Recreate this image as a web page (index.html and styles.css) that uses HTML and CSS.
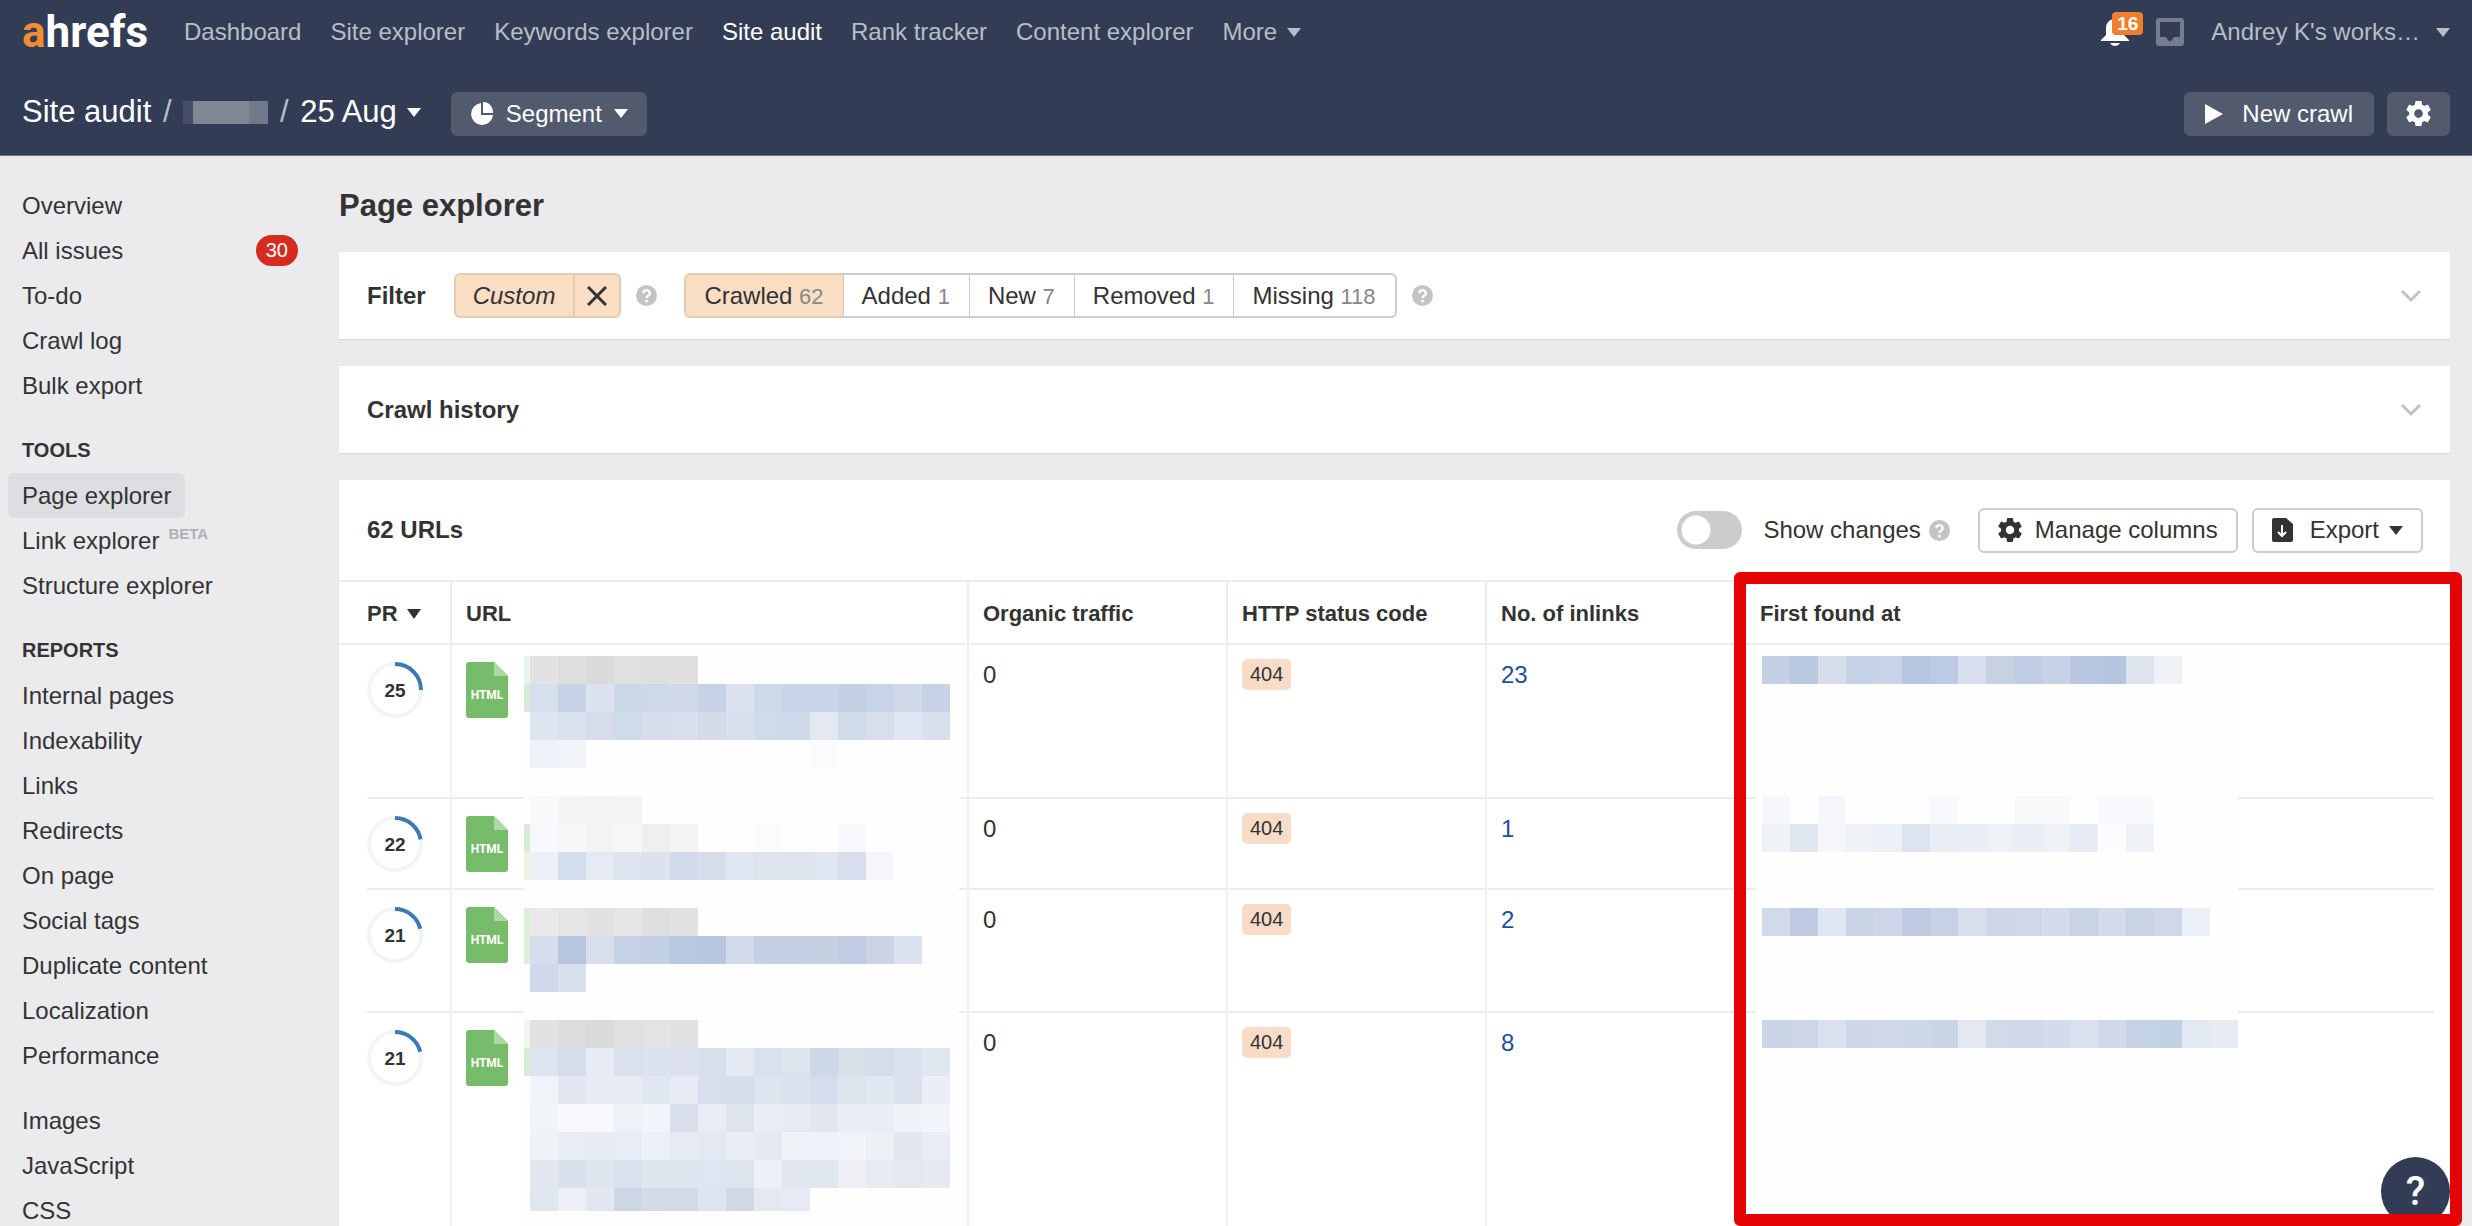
FILE: index.html
```
<!DOCTYPE html>
<html lang="en">
<head>
  <meta charset="utf-8">
  <title>Page explorer - Site audit</title>
  <link rel="stylesheet" href="styles.css">
</head>
<body>
  <svg class="sprite" aria-hidden="true">
    <symbol id="gear" viewBox="2 2 20 20">
      <path fill="currentColor" d="M19.43 12.98c.04-.32.07-.64.07-.98s-.03-.66-.07-.98l2.11-1.65c.19-.15.24-.42.12-.64l-2-3.46c-.12-.22-.39-.3-.61-.22l-2.49 1c-.52-.4-1.08-.73-1.69-.98l-.38-2.65C14.46 2.18 14.25 2 14 2h-4c-.25 0-.46.18-.49.42l-.38 2.65c-.61.25-1.17.59-1.69.98l-2.49-1c-.23-.09-.49 0-.61.22l-2 3.46c-.13.22-.07.49.12.64l2.11 1.65c-.04.32-.07.65-.07.98s.03.66.07.98l-2.11 1.65c-.19.15-.24.42-.12.64l2 3.46c.12.22.39.3.61.22l2.49-1c.52.4 1.08.73 1.69.98l.38 2.65c.03.24.24.42.49.42h4c.25 0 .46-.18.49-.42l.38-2.65c.61-.25 1.17-.59 1.69-.98l2.49 1c.23.09.49 0 .61-.22l2-3.46c.12-.22.07-.49-.12-.64l-2.11-1.65zM12 15.5c-1.93 0-3.5-1.57-3.5-3.5s1.57-3.5 3.5-3.5 3.500 1.57 3.500 3.500-1.570 3.500-3.500 3.500z"/>
    </symbol>
    <symbol id="help" viewBox="0 0 21 21">
      <circle cx="10.500" cy="10.500" r="10.500" fill="#c4c4c4"/>
      <path d="M7.300 8.200a3.200 3 0 1 1 4.900 2.500c-1.200.8-1.700 1.100-1.700 2.300" fill="none" stroke="#fff" stroke-width="2.300"/>
      <circle cx="10.500" cy="16" r="1.500" fill="#fff"/>
    </symbol>
    <symbol id="chevron" viewBox="0 0 22 14">
      <path d="M2 2l9 9 9-9" fill="none" stroke="#c4c4c4" stroke-width="3"/>
    </symbol>
    <symbol id="file" viewBox="0 0 42 56">
      <path d="M3 0h25l14 14v39a3 3 0 0 1-3 3H3a3 3 0 0 1-3-3V3a3 3 0 0 1 3-3z" fill="#77bc6b"/>
      <path d="M28 0l14 14H28z" fill="#add8a6"/>
    </symbol>
  </svg>

  <div class="page">
    <header class="header">
      <nav class="nav">
        <a class="logo" href="#"><span class="logo-a">a</span><span>hrefs</span></a>
        <a href="#">Dashboard</a>
        <a href="#">Site explorer</a>
        <a href="#">Keywords explorer</a>
        <a href="#" class="active">Site audit</a>
        <a href="#">Rank tracker</a>
        <a href="#">Content explorer</a>
        <button class="link-button">More <span class="caret"></span></button>
        <div class="nav-right">
          <button class="icon-button bell" aria-label="Notifications">
            <svg width="28" height="28" viewBox="0 0 28 28"><path d="M14 1c-5.500 0-9 4-9 9v7L0 22v1h28v-1l-5-5v-7c0-5-3.500-9-9-9zM9 25c1 2 3 3 5 3s4-1 5-3z" fill="#fff"/></svg>
            <span class="bell-count">16</span>
          </button>
          <button class="icon-button" aria-label="Inbox">
            <svg width="28" height="28" viewBox="0 0 28 28"><path fill="#747c8e" fill-rule="evenodd" d="M3 0h22a3 3 0 0 1 3 3v22a3 3 0 0 1-3 3H3a3 3 0 0 1-3-3V3a3 3 0 0 1 3-3zM4 4v15h6c1 0 1 4 4 4s3-4 4-4h6V4z"/></svg>
          </button>
          <button class="link-button workspace">Andrey K's works… <span class="caret"></span></button>
        </div>
      </nav>
      <div class="subnav">
        <a href="#" class="crumb">Site audit</a>
        <span class="slash">/</span>
        <span class="project"></span>
        <span class="slash">/</span>
        <button class="link-button crumb">25 Aug <span class="caret"></span></button>
        <button class="dark-button segment">
          <svg width="24" height="24" viewBox="0 0 24 24"><path d="M11 1a11 11 0 1 0 12 12H11z" fill="#fff"/><path d="M13 0a10 10 0 0 1 10 11H13z" fill="#fff"/></svg>
          Segment <span class="caret"></span>
        </button>
        <button class="dark-button crawl">
          <svg width="18" height="20" viewBox="0 0 18 20"><path d="M0 0l18 10L0 20z" fill="#fff"/></svg>
          New crawl
        </button>
        <button class="dark-button" aria-label="Settings"><svg width="25" height="25"><use href="#gear"/></svg></button>
      </div>
    </header>

    <div class="body">
      <aside class="sidebar">
        <ul>
          <li><a href="#">Overview</a></li>
          <li><a href="#">All issues</a><span class="count">30</span></li>
          <li><a href="#">To-do</a></li>
          <li><a href="#">Crawl log</a></li>
          <li><a href="#">Bulk export</a></li>
        </ul>
        <h2>TOOLS</h2>
        <ul>
          <li><a href="#" class="current">Page explorer</a></li>
          <li><a href="#">Link explorer</a><span class="beta">BETA</span></li>
          <li><a href="#">Structure explorer</a></li>
        </ul>
        <h2>REPORTS</h2>
        <ul>
          <li><a href="#">Internal pages</a></li>
          <li><a href="#">Indexability</a></li>
          <li><a href="#">Links</a></li>
          <li><a href="#">Redirects</a></li>
          <li><a href="#">On page</a></li>
          <li><a href="#">Social tags</a></li>
          <li><a href="#">Duplicate content</a></li>
          <li><a href="#">Localization</a></li>
          <li><a href="#">Performance</a></li>
        </ul>
        <ul class="spaced">
          <li><a href="#">Images</a></li>
          <li><a href="#">JavaScript</a></li>
          <li><a href="#">CSS</a></li>
        </ul>
      </aside>

      <main class="main">
        <h1>Page explorer</h1>

        <section class="card bar">
          <h3>Filter</h3>
          <div class="custom">
            <button class="custom-name">Custom</button>
            <button class="custom-clear" aria-label="Clear filter">
              <svg width="20" height="20" viewBox="0 0 20 20"><path d="M1 1l18 18M19 1L1 19" stroke="#333" stroke-width="3"/></svg>
            </button>
          </div>
          <svg class="help" width="21" height="21"><use href="#help"/></svg>
          <div class="tabs">
            <button class="selected">Crawled <span>62</span></button>
            <button>Added <span>1</span></button>
            <button>New <span>7</span></button>
            <button>Removed <span>1</span></button>
            <button>Missing <span>118</span></button>
          </div>
          <svg class="help" width="21" height="21"><use href="#help"/></svg>
          <button class="icon-button expand" aria-label="Expand filter"><svg width="22" height="14"><use href="#chevron"/></svg></button>
        </section>

        <section class="card bar">
          <h3>Crawl history</h3>
          <button class="icon-button expand" aria-label="Expand crawl history"><svg width="22" height="14"><use href="#chevron"/></svg></button>
        </section>

        <section class="card results">
          <div class="toolbar">
            <h3>62 URLs</h3>
            <input type="checkbox" class="toggle" id="changes">
            <label for="changes">Show changes</label>
            <svg class="toolbar-help" width="21" height="21"><use href="#help"/></svg>
            <button class="light-button">
              <svg width="24" height="24"><use href="#gear"/></svg>
              Manage columns
            </button>
            <button class="light-button export">
              <svg width="21" height="24" viewBox="0 0 21 24"><path d="M2 0h12l7 6v16a2 2 0 0 1-2 2H2a2 2 0 0 1-2-2V2a2 2 0 0 1 2-2z" fill="#333"/><path d="M10 7v11M6 14l4 4 4-4" fill="none" stroke="#fff" stroke-width="2"/></svg>
              Export <span class="caret"></span>
            </button>
          </div>
          <table>
            <colgroup>
              <col class="col-pr"><col class="col-url"><col class="col-num"><col class="col-num"><col class="col-num"><col>
            </colgroup>
            <thead>
              <tr>
                <th>PR <span class="caret"></span></th>
                <th>URL</th>
                <th>Organic traffic</th>
                <th>HTTP status code</th>
                <th>No. of inlinks</th>
                <th>First found at</th>
              </tr>
            </thead>
            <tbody>
              <tr class="lines-4">
                <td>
                  <div class="rating"><svg width="56" height="56" viewBox="0 0 56 56"><circle class="ring" cx="28" cy="28" r="26"/><circle class="arc" cx="28" cy="28" r="26" pathLength="100" stroke-dasharray="25 75" transform="rotate(-90 28 28)"/></svg><span>25</span></div>
                </td>
                <td>
                  <div class="file"><svg width="42" height="56"><use href="#file"/></svg><span>HTML</span></div>
                  <div class="mask mask-url" id="mask-url"></div>
                </td>
                <td>0</td>
                <td><span class="status">404</span></td>
                <td><a href="#">23</a></td>
                <td><div class="mask mask-found" id="mask-found"></div></td>
              </tr>
              <tr class="lines-2">
                <td>
                  <div class="rating"><svg width="56" height="56" viewBox="0 0 56 56"><circle class="ring" cx="28" cy="28" r="26"/><circle class="arc" cx="28" cy="28" r="26" pathLength="100" stroke-dasharray="22 78" transform="rotate(-90 28 28)"/></svg><span>22</span></div>
                </td>
                <td>
                  <div class="file"><svg width="42" height="56"><use href="#file"/></svg><span>HTML</span></div>
                </td>
                <td>0</td>
                <td><span class="status">404</span></td>
                <td><a href="#">1</a></td>
                <td></td>
              </tr>
              <tr class="lines-3">
                <td>
                  <div class="rating"><svg width="56" height="56" viewBox="0 0 56 56"><circle class="ring" cx="28" cy="28" r="26"/><circle class="arc" cx="28" cy="28" r="26" pathLength="100" stroke-dasharray="21 79" transform="rotate(-90 28 28)"/></svg><span>21</span></div>
                </td>
                <td>
                  <div class="file"><svg width="42" height="56"><use href="#file"/></svg><span>HTML</span></div>
                </td>
                <td>0</td>
                <td><span class="status">404</span></td>
                <td><a href="#">2</a></td>
                <td></td>
              </tr>
              <tr class="lines-6">
                <td>
                  <div class="rating"><svg width="56" height="56" viewBox="0 0 56 56"><circle class="ring" cx="28" cy="28" r="26"/><circle class="arc" cx="28" cy="28" r="26" pathLength="100" stroke-dasharray="21 79" transform="rotate(-90 28 28)"/></svg><span>21</span></div>
                </td>
                <td>
                  <div class="file"><svg width="42" height="56"><use href="#file"/></svg><span>HTML</span></div>
                </td>
                <td>0</td>
                <td><span class="status">404</span></td>
                <td><a href="#">8</a></td>
                <td></td>
              </tr>
            </tbody>
          </table>
          <button class="support" aria-label="Help">?</button>
          <div class="highlight"></div>
        </section>
      </main>
    </div>
  </div>

  <script>
    // one string per mosaic line, first value is the narrow strip on the left, "-" is an empty block
    const urlRows = [
      "eaf5ea e2e2e2 dedede dadada e0e0e0 dedede dfdfdf",
      "d8ebd6 d6e0ec c6d2e6 dce3f0 ccd8e8 cdd8ea cfd9eb c6d1e5 dbe1ef ccd9e8 c7d3e6 c8d4e7 c4d1e5 c7d3e6 cfd9ea c7d2e6",
      "- dde5f0 d9e1ed d6ddea d0dbe9 d6deec dadfed d5dbe9 d6e1ec d0dbe9 ced9ea e3e8f3 d1dcea d7deec dfe6f1 d9e0ed",
      "- eef2f8 f1f5f9 - - - - - - - - fbfcfe",
      "-",
      "- fafafa f5f5f5 f3f3f3 f5f5f5",
      "d8ebd6 f6f8fb f7f7f7 f3f3f3 f6f6f6 efefef f3f3f3 - - fcfcfc - - f8f9fc",
      "eaf5e8 ebeff8 d3deed e5eaf5 dce4f0 dbe3ef d1dbeb d6dcea dfe6f2 dce4ee dce4ee dfe6f2 d7deed f5f6fb",
      "-",
      "dcefd9 e9e9e9 e5e5e5 e2e2e2 e7e7e7 dfdfdf e2e2e2",
      "dcefd9 d5deed b7c5e0 d8deec c5d2e6 c4d1e5 b8c8df b8c7e0 d1dbea c4d1e4 c4d1e5 c5d1e3 c0cbe4 cbd3e7 dbe2ef",
      "- cfd9eb d8dfed",
      "-",
      "eff6ee e2e2e2 dcdcdc dadada e0e0e0 e3e3e3 e1e1e1",
      "d8ebd6 dde4f0 d5ddeb e6ebf5 dae1ed dce2ef dde1ef d6e0eb e4e8f3 dae0ed dce4ed cbd8e7 d8dfe9 d7ddeb dae1ec dfe7f1",
      "- f0f4f9 e3e7f1 e7ebf4 e8ebf4 e0e7f1 e7eaf4 d8deeb d7ddeb dde5ee dbe1ee d6dceb dce4ee e1e8f2 dbe2ee ebeef8",
      "- f1f5f9 f6f8fc f6f8fc eef2f6 f1f4f9 d9e0ec e8ecf5 dde4ee e9edf5 e7ebf4 e4e7f0 ebeef8 eaecf6 eff2f6 f1f5f9",
      "- eff3f8 e9edf5 e7ebf3 e8ecf5 ecf0f8 e6eaf3 e4e8f1 e8ecf5 e5e9f2 eff2f6 eef2f8 f1f5fa edf0f5 e4e7f1 eaedf6",
      "- e3e7f1 d9dfeb dde5ef dae0ec dee5ef dde5ee dfe6f1 dee5ef ecf0f8 e3e7f0 dfe8f1 edeff4 e7ebf4 e3e8f1 e4e9f2",
      "- dfe7ef ecf0f5 e3e7f1 ccd6e5 d5dce8 d5dbe6 dde4ef d1d8e5 e5e9f2 e6eaf4"
    ];
    const foundRows = [
      "- c4d0e3 b9c9df d6ddea c4d1e6 c8d3e7 b6c6de bccbe3 d7deed c6d1e4 c0cbe4 c7d2e6 b8c7df b5c4df dce4ee eef2f7",
      "-", "-", "-", "-",
      "- f5f7fb fcfdff f5f6fb - - fcfdff f8f9fd - - f9fafc f9fafc - f8f9fc f8f9fd",
      "- eff3f8 dee6f0 f5f7fb eef2f7 ecf0f8 dce4f0 e8edf6 eaeef8 eef2f7 eaeef7 eef2f7 e6ebf5 fbfcfe eff3f8",
      "-", "-",
      "- d0daea bfcbe3 e0e7f2 c9d5e6 ccd6e8 bdcae2 c5d1e5 d9e0ed cdd7e8 ced8ea d2dceb c8d4e6 d2dceb c8d4e5 cfd8ea ebeff8",
      "-", "-", "-",
      "- cad6e7 ccd6e7 dae0ed cdd7e8 cfd9e9 ccd8e8 c9d5e6 e3e8f2 d0dae9 cfd9ea d2dceb d9e0ee cfd9e9 c6d2e5 c3d1e6 e3e9f3 e6ebf4"
    ];

    function drawMask(id, rows) {
      const mask = document.getElementById(id);
      rows.forEach(row => {
        const line = document.createElement("div");
        line.className = "mask-line";
        row.split(" ").forEach(color => {
          const block = document.createElement("i");
          if (color !== "-") block.style.background = "#" + color;
          line.appendChild(block);
        });
        mask.appendChild(line);
      });
    }

    drawMask("mask-url", urlRows);
    drawMask("mask-found", foundRows);
  </script>
</body>
</html>
```
FILE: styles.css
```
* {
  box-sizing: border-box;
}

body {
  margin: 0;
  font-family: "Liberation Sans", Arial, sans-serif;
  font-size: 24px;
  color: #333;
  background: #ebebed;
}

button {
  font: inherit;
  color: inherit;
  padding: 0;
  border: none;
  background: none;
  cursor: pointer;
}

a {
  color: inherit;
  text-decoration: none;
}

svg {
  display: block;
  flex: none;
}

h1, h2, h3, ul {
  margin: 0;
  padding: 0;
}

.sprite {
  position: absolute;
  width: 0;
  height: 0;
}

.page {
  display: flex;
  flex-direction: column;
  height: 100vh;
  overflow: hidden;
}

.caret {
  display: inline-block;
  border: 7px solid transparent;
  border-top: 9px solid currentColor;
  border-bottom: 0;
}

/* header */
.header {
  background: #323d55;
  border-bottom: 1px solid #70788a;
  padding: 0 22px;
  color: #fff;
}

.nav {
  display: flex;
  align-items: center;
  gap: 29px;
  height: 64px;
  color: #b9bdc6;
}

.nav .active {
  color: #fff;
}

.nav .logo {
  display: flex;
  width: 133px;
  font: bold 44px/52px Roboto, sans-serif;
  color: #fff;
}

.logo .logo-a {
  color: #f08c33;
}

.link-button {
  display: flex;
  align-items: center;
  gap: 10px;
}

.nav-right {
  display: flex;
  align-items: center;
  gap: 27px;
  margin-left: auto;
}

.workspace {
  gap: 16px;
}

.icon-button {
  display: block;
}

.bell {
  position: relative;
}

.bell-count {
  position: absolute;
  left: 11px;
  top: -6px;
  width: 31px;
  border-radius: 4px;
  background: #ef7f2f;
  color: #fff;
  font-size: 19px;
  font-weight: bold;
  line-height: 23px;
}

.subnav {
  display: flex;
  align-items: center;
  height: 91px;
  padding-top: 5px;
}

.crumb {
  font-size: 31px;
}

.slash {
  width: 32px;
  font-size: 31px;
  text-align: center;
  color: #b9bdc6;
}

.project {
  width: 85px;
  height: 23px;
  background: linear-gradient(90deg, #464f65 10px, #808694 10px, #808694 66px, #727989 66px);
}

.dark-button {
  display: flex;
  align-items: center;
  height: 44px;
  margin-top: 3px;
  padding: 0 19px;
  border-radius: 6px;
  background: #525a6e;
}

.segment {
  gap: 12px;
  margin-left: 30px;
}

.crawl {
  gap: 19px;
  padding: 0 21px;
  margin-left: auto;
  margin-right: 13px;
}

/* layout */
.body {
  flex: 1;
  display: flex;
  min-height: 0;
}

.sidebar {
  flex: none;
  width: 339px;
  padding: 27px 41px 0 8px;
}

.sidebar ul {
  list-style: none;
}

.sidebar li {
  display: flex;
  align-items: center;
  height: 45px;
}

.sidebar li a {
  padding: 0 14px;
  line-height: 45px;
  border-radius: 6px;
}

.sidebar .current {
  background: #dddee2;
}

.sidebar h2 {
  padding: 20px 14px 0;
  font-size: 20px;
  line-height: 45px;
}

.sidebar .spaced {
  margin-top: 20px;
}

.count {
  margin-left: auto;
  padding: 0 10px;
  border-radius: 16px;
  background: #d52b20;
  color: #fff;
  font-size: 20px;
  line-height: 31px;
}

.beta {
  margin: 0 0 15px -5px;
  font-size: 15px;
  font-weight: bold;
  color: #b0b0b2;
}

.main {
  flex: 1;
  display: flex;
  flex-direction: column;
  min-width: 0;
  padding-right: 22px;
}

h1 {
  margin: 30px 0 26px;
  font-size: 31px;
  line-height: 40px;
}

h3 {
  font-size: 24px;
}

.card {
  background: #fff;
  box-shadow: 0 1px 1px #d9d9dc;
}

/* filter bars */
.bar {
  flex: none;
  display: flex;
  align-items: center;
  height: 87px;
  margin-bottom: 27px;
  padding: 0 28px;
}

.custom {
  display: flex;
  height: 45px;
  margin-left: 28px;
  border: 2px solid #e6cbb0;
  border-radius: 6px;
  background: #f9dec4;
}

.custom-name {
  padding: 0 18px 0 17px;
  font-style: italic;
}

.custom-clear {
  padding: 0 12px;
  border-left: 2px solid #e6cbb0;
}

.help {
  margin-left: 15px;
}

.tabs {
  display: flex;
  height: 45px;
  margin-left: 27px;
}

.tabs button {
  margin-left: -1px;
  padding: 0 19px 0 18px;
  border: 2px solid #ccc;
  border-left-width: 1px;
  border-right-width: 1px;
}

.tabs button span {
  font-size: 22px;
  color: #888;
}

.tabs .selected {
  margin-left: 0;
  border-color: #e6cbb0;
  border-left-width: 2px;
  border-radius: 6px 0 0 6px;
  background: #f9dec4;
}

.tabs button:last-child {
  border-right-width: 2px;
  border-radius: 0 6px 6px 0;
}

.expand {
  margin-left: auto;
}

/* results */
.results {
  position: relative;
  flex: 1;
  min-height: 0;
}

.toolbar {
  display: flex;
  align-items: center;
  height: 100px;
  padding: 0 27px 0 28px;
}

.toggle {
  appearance: none;
  width: 65px;
  height: 38px;
  margin: 0 21px 0 auto;
  border-radius: 19px;
  background: radial-gradient(circle at 19px 19px, #fff 14px, #ccc 15px);
}

.toolbar-help {
  margin: 0 28px 0 8px;
}

.light-button {
  display: flex;
  align-items: center;
  gap: 13px;
  height: 45px;
  padding: 0 18px;
  border: 2px solid #ccc;
  border-radius: 6px;
}

.export {
  margin-left: 14px;
}

.export svg {
  margin-right: 4px;
}

.export .caret {
  margin-left: -3px;
}

table {
  width: 100%;
  table-layout: fixed;
  border-collapse: separate;
  border-spacing: 0;
}

.col-pr {
  width: 113px;
}

.col-url {
  width: 517px;
}

.col-num {
  width: 259px;
}

th {
  height: 65px;
  padding: 2px 14px 0;
  border-top: 2px solid #ececee;
  border-bottom: 2px solid #ececee;
  border-right: 2px solid #ececee;
  font-size: 22px;
  text-align: left;
}

th .caret {
  margin: 0 0 2px 3px;
  border-top-width: 10px;
}

td {
  position: relative;
  padding: 14px;
  border-right: 2px solid #f0f0f2;
  background: linear-gradient(#ececee, #ececee) no-repeat 0 100% / 100% 2px;
  line-height: 31px;
  vertical-align: top;
}

th:first-child,
td:first-child {
  padding-left: 28px;
}

th:last-child,
td:last-child {
  border-right: none;
}

td:first-child {
  background-position: 28px 100%;
}

td:last-child {
  background-size: calc(100% - 16px) 2px;
}

.lines-4 td {
  height: 154px;
}

.lines-2 td {
  height: 91px;
}

.lines-3 td {
  height: 123px;
}

.lines-6 td {
  height: 220px;
}

td a {
  color: #1f4e9e;
}

.rating,
.file {
  display: grid;
  width: 56px;
  margin-top: 3px;
  place-items: center;
  font-size: 19px;
  font-weight: bold;
}

.file {
  width: 42px;
  color: #fff;
  font: bold 12px Roboto, sans-serif;
}

.rating svg,
.rating span,
.file svg,
.file span {
  grid-area: 1 / 1;
}

.file span {
  padding-top: 10px;
}

.ring {
  fill: none;
  stroke: #f3f4f6;
  stroke-width: 4px;
}

.arc {
  fill: none;
  stroke: #3a7ab5;
  stroke-width: 4px;
}

.status {
  display: inline-block;
  padding: 0 8px;
  border-radius: 5px;
  background: #f9dcc8;
  font-size: 20px;
  vertical-align: top;
}

/* pixelated blocks over the private urls */
.mask {
  position: absolute;
  z-index: 1;
  top: 8px;
  padding-top: 3px;
  height: 573px;
  background: #fefefe;
}

.mask-url {
  left: 72px;
  width: 435px;
}

.mask-found {
  left: 10px;
  width: 482px;
}

.mask-line {
  display: flex;
  height: 28px;
}

.mask-line i {
  width: 28px;
}

.mask-line i:first-child {
  width: 6px;
}

.mask-url .mask-line:last-child {
  height: 23px;
}

.support {
  position: absolute;
  z-index: 2;
  right: 0;
  bottom: 0;
  width: 69px;
  height: 69px;
  border-radius: 50%;
  background: #323d55;
  color: #fff;
  font: 500 40px/69px Roboto, sans-serif;
}

.highlight {
  position: absolute;
  z-index: 3;
  top: 92px;
  right: -12px;
  bottom: 0;
  left: 1395px;
  border: 12px solid #e60303;
  border-radius: 6px;
}
```
